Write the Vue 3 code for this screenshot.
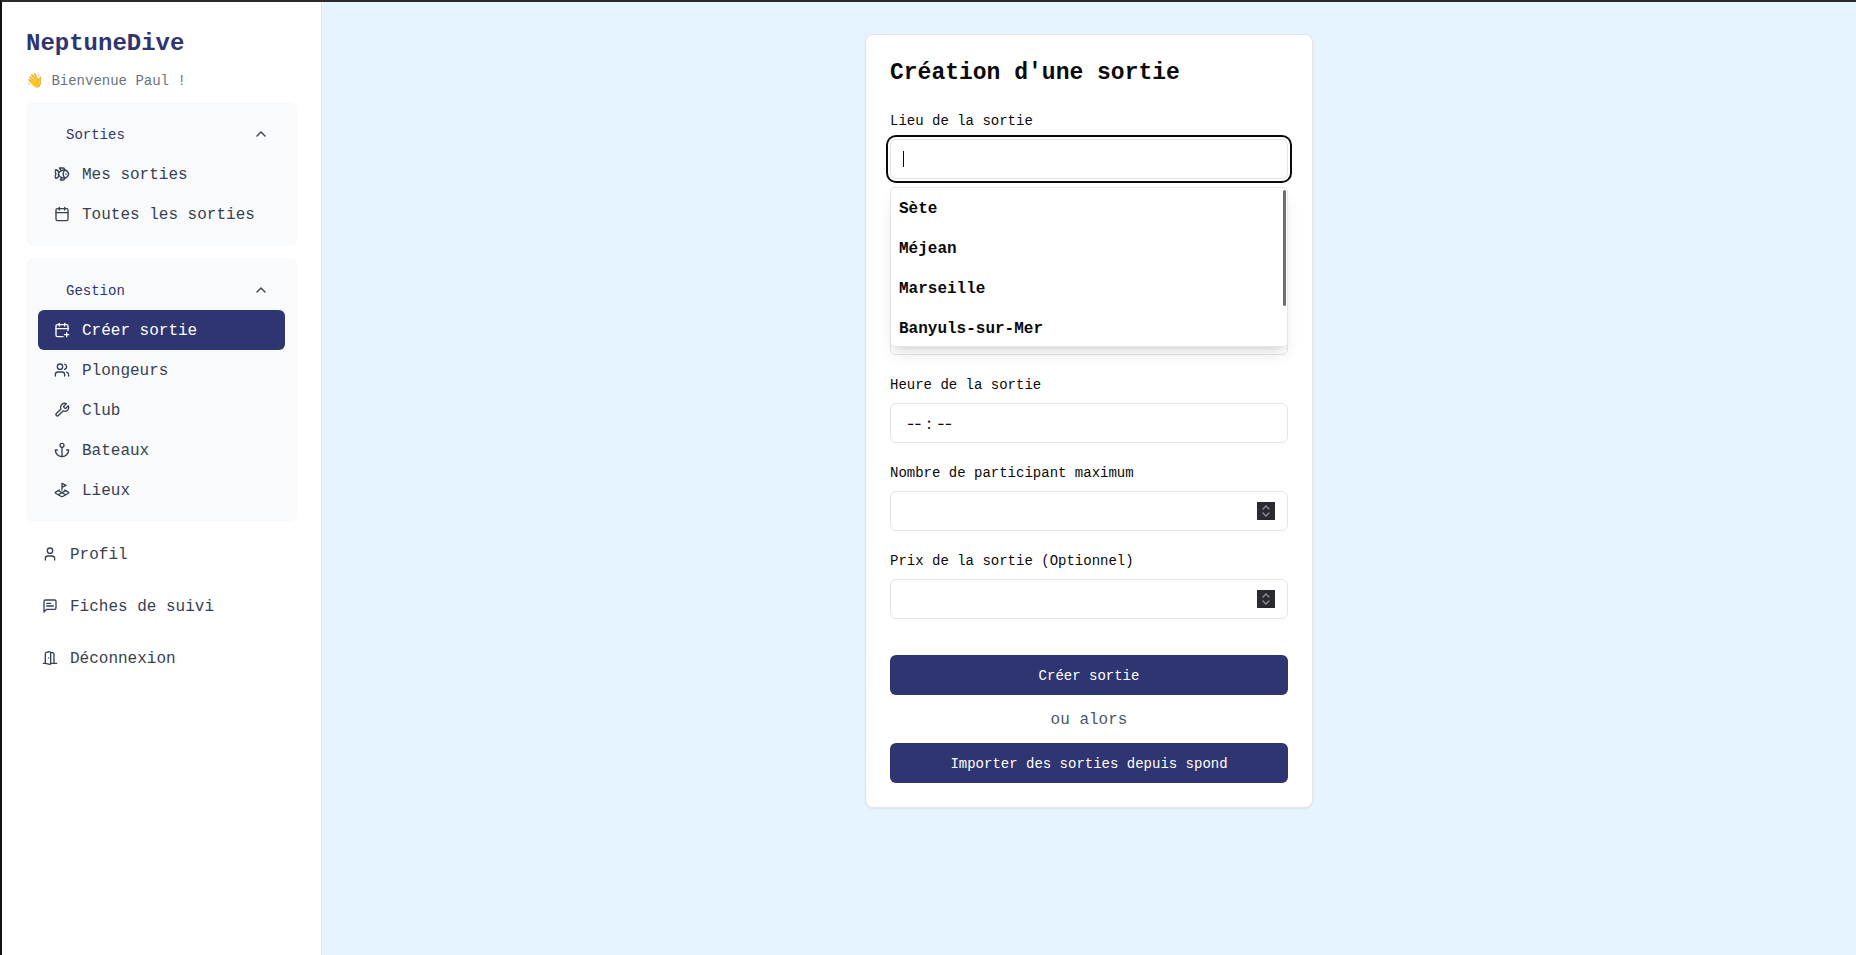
<script setup>
import { ref } from 'vue'

const icons = {
  fish: ['M6.5 12c.94-3.46 4.94-6 8.5-6 3.56 0 6.06 2.54 7 6-.94 3.47-3.44 6-7 6s-7.56-2.53-8.5-6Z', 'M18 12v.5', 'M16 17.93a9.77 9.77 0 0 1 0-11.86', 'M7 10.67C7 8 5.58 5.97 2.73 5.5c-1 1.5-1 5 .23 6.5-1.24 1.5-1.24 5-.23 6.5C5.58 18.03 7 16 7 13.33', 'M10.46 7.26C10.2 5.88 9.17 4.24 8 3h5.8a2 2 0 0 1 1.98 1.67l.23 1.4', 'm16.01 17.93-.23 1.4A2 2 0 0 1 13.8 21H9.5a5.96 5.96 0 0 0 1.49-3.98'],
  calendar: ['M8 2v4', 'M16 2v4', 'M5 4h14a2 2 0 0 1 2 2v14a2 2 0 0 1-2 2H5a2 2 0 0 1-2-2V6a2 2 0 0 1 2-2z', 'M3 10h18'],
  calendarPlus: ['M16 19h6', 'M16 2v4', 'M19 16v6', 'M21 12.6V6a2 2 0 0 0-2-2H5a2 2 0 0 0-2 2v14a2 2 0 0 0 2 2h8.5', 'M3 10h18', 'M8 2v4'],
  users: ['M16 21v-2a4 4 0 0 0-4-4H6a4 4 0 0 0-4 4v2', 'M5 7a4 4 0 1 0 8 0a4 4 0 1 0-8 0', 'M22 21v-2a4 4 0 0 0-3-3.87', 'M16 3.13a4 4 0 0 1 0 7.75'],
  wrench: ['M14.7 6.3a1 1 0 0 0 0 1.4l1.6 1.6a1 1 0 0 0 1.4 0l3.77-3.77a6 6 0 0 1-7.94 7.94l-6.91 6.91a2.12 2.12 0 0 1-3-3l6.91-6.91a6 6 0 0 1 7.94-7.94l-3.76 3.76z'],
  anchor: ['M12 22V8', 'M5 12H2a10 10 0 0 0 20 0h-3', 'M9 5a3 3 0 1 0 6 0a3 3 0 1 0-6 0'],
  plot: ['m12 8 6-3-6-3v10', 'm8 11.99-5.5 3.14a1 1 0 0 0 0 1.74l8.5 4.86a2 2 0 0 0 2 0l8.5-4.86a1 1 0 0 0 0-1.74L16 12', 'm6.49 12.85 11.02 6.3', 'M17.51 12.85 6.5 19.15'],
  user: ['M19 21v-2a4 4 0 0 0-4-4H9a4 4 0 0 0-4 4v2', 'M8 7a4 4 0 1 0 8 0a4 4 0 1 0-8 0'],
  message: ['M21 15a2 2 0 0 1-2 2H7l-4 4V5a2 2 0 0 1 2-2h14a2 2 0 0 1 2 2z', 'M13 8H7', 'M17 12H7'],
  door: ['M13 4h3a2 2 0 0 1 2 2v14', 'M2 20h3', 'M13 20h9', 'M10 12v.01', 'M13 4.562v16.157a1 1 0 0 1-1.242.97L5 20V5.562a2 2 0 0 1 1.515-1.94l4-1A2 2 0 0 1 13 4.561Z'],
}

const groups = [
  {
    title: 'Sorties',
    items: [
      { label: 'Mes sorties', icon: 'fish' },
      { label: 'Toutes les sorties', icon: 'calendar' },
    ],
  },
  {
    title: 'Gestion',
    items: [
      { label: 'Créer sortie', icon: 'calendarPlus', active: true },
      { label: 'Plongeurs', icon: 'users' },
      { label: 'Club', icon: 'wrench' },
      { label: 'Bateaux', icon: 'anchor' },
      { label: 'Lieux', icon: 'plot' },
    ],
  },
]

const links = [
  { label: 'Profil', icon: 'user' },
  { label: 'Fiches de suivi', icon: 'message' },
  { label: 'Déconnexion', icon: 'door' },
]

const places = ['Sète', 'Méjean', 'Marseille', 'Banyuls-sur-Mer']

const place = ref('')
const name = ref('')
const date = ref('')
const time = ref('')
const seats = ref('')
const price = ref('')
</script>

<template>
  <div class="app">
    <aside class="sidebar">
      <h1 class="brand">NeptuneDive</h1>
      <p class="welcome">👋 Bienvenue Paul !</p>

      <nav v-for="group in groups" :key="group.title" class="group">
        <button type="button" class="group-head">
          <span>{{ group.title }}</span>
          <svg class="icon" viewBox="0 0 24 24" aria-hidden="true"><path d="m18 15-6-6-6 6" /></svg>
        </button>
        <a v-for="item in group.items" :key="item.label" href="#" class="link" :class="{ active: item.active }">
          <svg class="icon" viewBox="0 0 24 24" aria-hidden="true">
            <path v-for="d in icons[item.icon]" :key="d" :d="d" />
          </svg>
          <span>{{ item.label }}</span>
        </a>
      </nav>

      <a v-for="item in links" :key="item.label" href="#" class="link">
        <svg class="icon" viewBox="0 0 24 24" aria-hidden="true">
          <path v-for="d in icons[item.icon]" :key="d" :d="d" />
        </svg>
        <span>{{ item.label }}</span>
      </a>
    </aside>

    <main class="main">
      <form class="card" @submit.prevent>
        <h2 class="title">Création d'une sortie</h2>

        <div class="fields">
          <div class="field">
            <label for="place">Lieu de la sortie</label>
            <div class="control">
              <input id="place" v-model="place" class="input focused" type="text" autocomplete="off" />
              <span class="caret" aria-hidden="true"></span>
              <div class="menu">
                <button v-for="p in places" :key="p" type="button" class="option" @click="place = p">{{ p }}</button>
                <span class="thumb" aria-hidden="true"></span>
              </div>
            </div>
          </div>

          <div class="field unlabelled">
            <input v-model="name" class="input" type="text" aria-label="Nom de la sortie" />
          </div>

          <div class="field unlabelled">
            <input v-model="date" class="input" type="text" aria-label="Date de la sortie" />
          </div>

          <div class="field">
            <label for="time">Heure de la sortie</label>
            <input id="time" v-model="time" class="input time" type="time" />
          </div>

          <div class="field">
            <label for="seats">Nombre de participant maximum</label>
            <div class="control">
              <input id="seats" v-model="seats" class="input number" type="number" />
              <svg class="spinner" viewBox="0 0 18 18" aria-hidden="true"><path d="M6 7l3-3 3 3M6 11l3 3 3-3" /></svg>
            </div>
          </div>

          <div class="field">
            <label for="price">Prix de la sortie (Optionnel)</label>
            <div class="control">
              <input id="price" v-model="price" class="input number" type="number" />
              <svg class="spinner" viewBox="0 0 18 18" aria-hidden="true"><path d="M6 7l3-3 3 3M6 11l3 3 3-3" /></svg>
            </div>
          </div>
        </div>

        <div class="actions">
          <button type="submit" class="button">Créer sortie</button>
          <p class="or">ou alors</p>
          <button type="button" class="button">Importer des sorties depuis spond</button>
        </div>
      </form>
    </main>
  </div>
</template>

<style>
body {
  margin: 0;
}
</style>

<style scoped>
* {
  box-sizing: border-box;
}

.app {
  display: flex;
  min-height: 100vh;
  border-top: 2px solid #2b2b2b;
  border-left: 2px solid #111111;
  background: #e5f4ff;
  color: #0a0a0a;
  font-family: "Liberation Mono", "DejaVu Sans Mono", monospace;
  font-size: 16px;
  line-height: 24px;
}

h1,
h2,
p {
  margin: 0;
}

button,
input {
  font-family: inherit;
}

.sidebar {
  display: flex;
  flex-direction: column;
  flex: none;
  gap: 12px;
  width: 320px;
  padding: 24px;
  border-right: 1px solid #dbe7f1;
  background: #ffffff;
}

.brand {
  padding-top: 4px;
  color: #2f3570;
  font-size: 24px;
  line-height: 28px;
  font-weight: 700;
}

.welcome {
  padding-top: 2px;
  color: #6b7280;
  font-size: 14px;
  line-height: 18px;
}

.group {
  display: flex;
  flex-direction: column;
  padding: 12px;
  border-radius: 6px;
  background: #f9fafc;
}

.group-head {
  display: flex;
  align-items: center;
  justify-content: space-between;
  height: 40px;
  padding: 0 16px 0 28px;
  border: 0;
  background: transparent;
  color: #2f3570;
  font-size: 14px;
  font-weight: 500;
}

.group-head .icon {
  color: #374151;
}

.link {
  display: flex;
  align-items: center;
  gap: 12px;
  height: 40px;
  padding: 0 16px;
  border-radius: 6px;
  color: #374151;
  text-decoration: none;
}

.link span,
.group-head span {
  padding-top: 2px;
}

.link.active {
  background: #2f3570;
  color: #ffffff;
}

.icon {
  flex: none;
  width: 16px;
  height: 16px;
  fill: none;
  stroke: currentColor;
  stroke-width: 2;
  stroke-linecap: round;
  stroke-linejoin: round;
}

.main {
  display: flex;
  flex: 1;
  align-items: flex-start;
  justify-content: center;
  padding: 32px;
}

.card {
  display: flex;
  flex-direction: column;
  gap: 24px;
  width: 100%;
  max-width: 448px;
  padding: 24px;
  border: 1px solid #e5e5e5;
  border-radius: 8px;
  background: #ffffff;
  box-shadow: 0 1px 2px rgba(0, 0, 0, 0.06);
}

.title {
  padding-top: 4px;
  font-size: 23px;
  line-height: 20px;
  font-weight: 600;
}

.fields {
  display: flex;
  flex-direction: column;
  gap: 16px;
}

.field {
  display: flex;
  flex-direction: column;
  gap: 8px;
}

.field.unlabelled {
  padding-top: 32px;
}

.field label {
  padding-top: 4px;
  font-size: 14px;
  line-height: 20px;
  font-weight: 500;
}

.control {
  position: relative;
  display: flex;
}

.input {
  width: 100%;
  height: 40px;
  padding: 0 12px;
  border: 1px solid #e5e5e5;
  border-radius: 6px;
  outline: none;
  background: #ffffff;
  color: #0a0a0a;
  font-size: 14px;
}

.focused {
  box-shadow: 0 0 0 2px #ffffff, 0 0 0 4px #0a0a0a;
  caret-color: transparent;
}

.caret {
  position: absolute;
  top: 12px;
  left: 13px;
  width: 1px;
  height: 16px;
  background: #0a0a0a;
}

.menu {
  position: absolute;
  top: 48px;
  left: 0;
  z-index: 2;
  display: flex;
  flex-direction: column;
  width: 100%;
  height: 160px;
  overflow: hidden;
  border: 1px solid #e5e5e5;
  border-radius: 4px;
  background: #ffffff;
  box-shadow: 0 10px 15px -3px rgba(0, 0, 0, 0.1), 0 4px 6px -4px rgba(0, 0, 0, 0.1);
}

.option {
  flex: none;
  height: 40px;
  padding: 2px 8px 0;
  border: 0;
  background: transparent;
  color: #0a0a0a;
  font-size: 16px;
  font-weight: 700;
  text-align: left;
}

.thumb {
  position: absolute;
  top: 2px;
  right: 1px;
  width: 3px;
  height: 116px;
  border-radius: 2px;
  background: #6e6e6e;
}

.time {
  font-family: Inter, sans-serif;
  font-size: 16px;
}

.time::-webkit-datetime-edit-hour-field {
  padding: 0 5px 0 4px;
}

.time::-webkit-datetime-edit-minute-field {
  padding: 0 4px 0 6px;
}

.time::-webkit-datetime-edit-ampm-field,
.time::-webkit-calendar-picker-indicator {
  display: none;
}

.number {
  appearance: textfield;
}

.spinner {
  position: absolute;
  top: 11px;
  right: 13px;
  width: 18px;
  height: 18px;
  background: #2b2a33;
  fill: none;
  stroke: #8f8f9d;
  stroke-width: 1.4;
  stroke-linecap: round;
}

.actions {
  display: flex;
  flex-direction: column;
  gap: 12px;
  margin-top: 12px;
}

.button {
  height: 40px;
  padding: 2px 16px 0;
  border: 0;
  border-radius: 6px;
  background: #2f3570;
  color: #ffffff;
  font-size: 14px;
  font-weight: 500;
}

.or {
  padding-top: 2px;
  color: #4b5563;
  line-height: 22px;
  text-align: center;
}
</style>
